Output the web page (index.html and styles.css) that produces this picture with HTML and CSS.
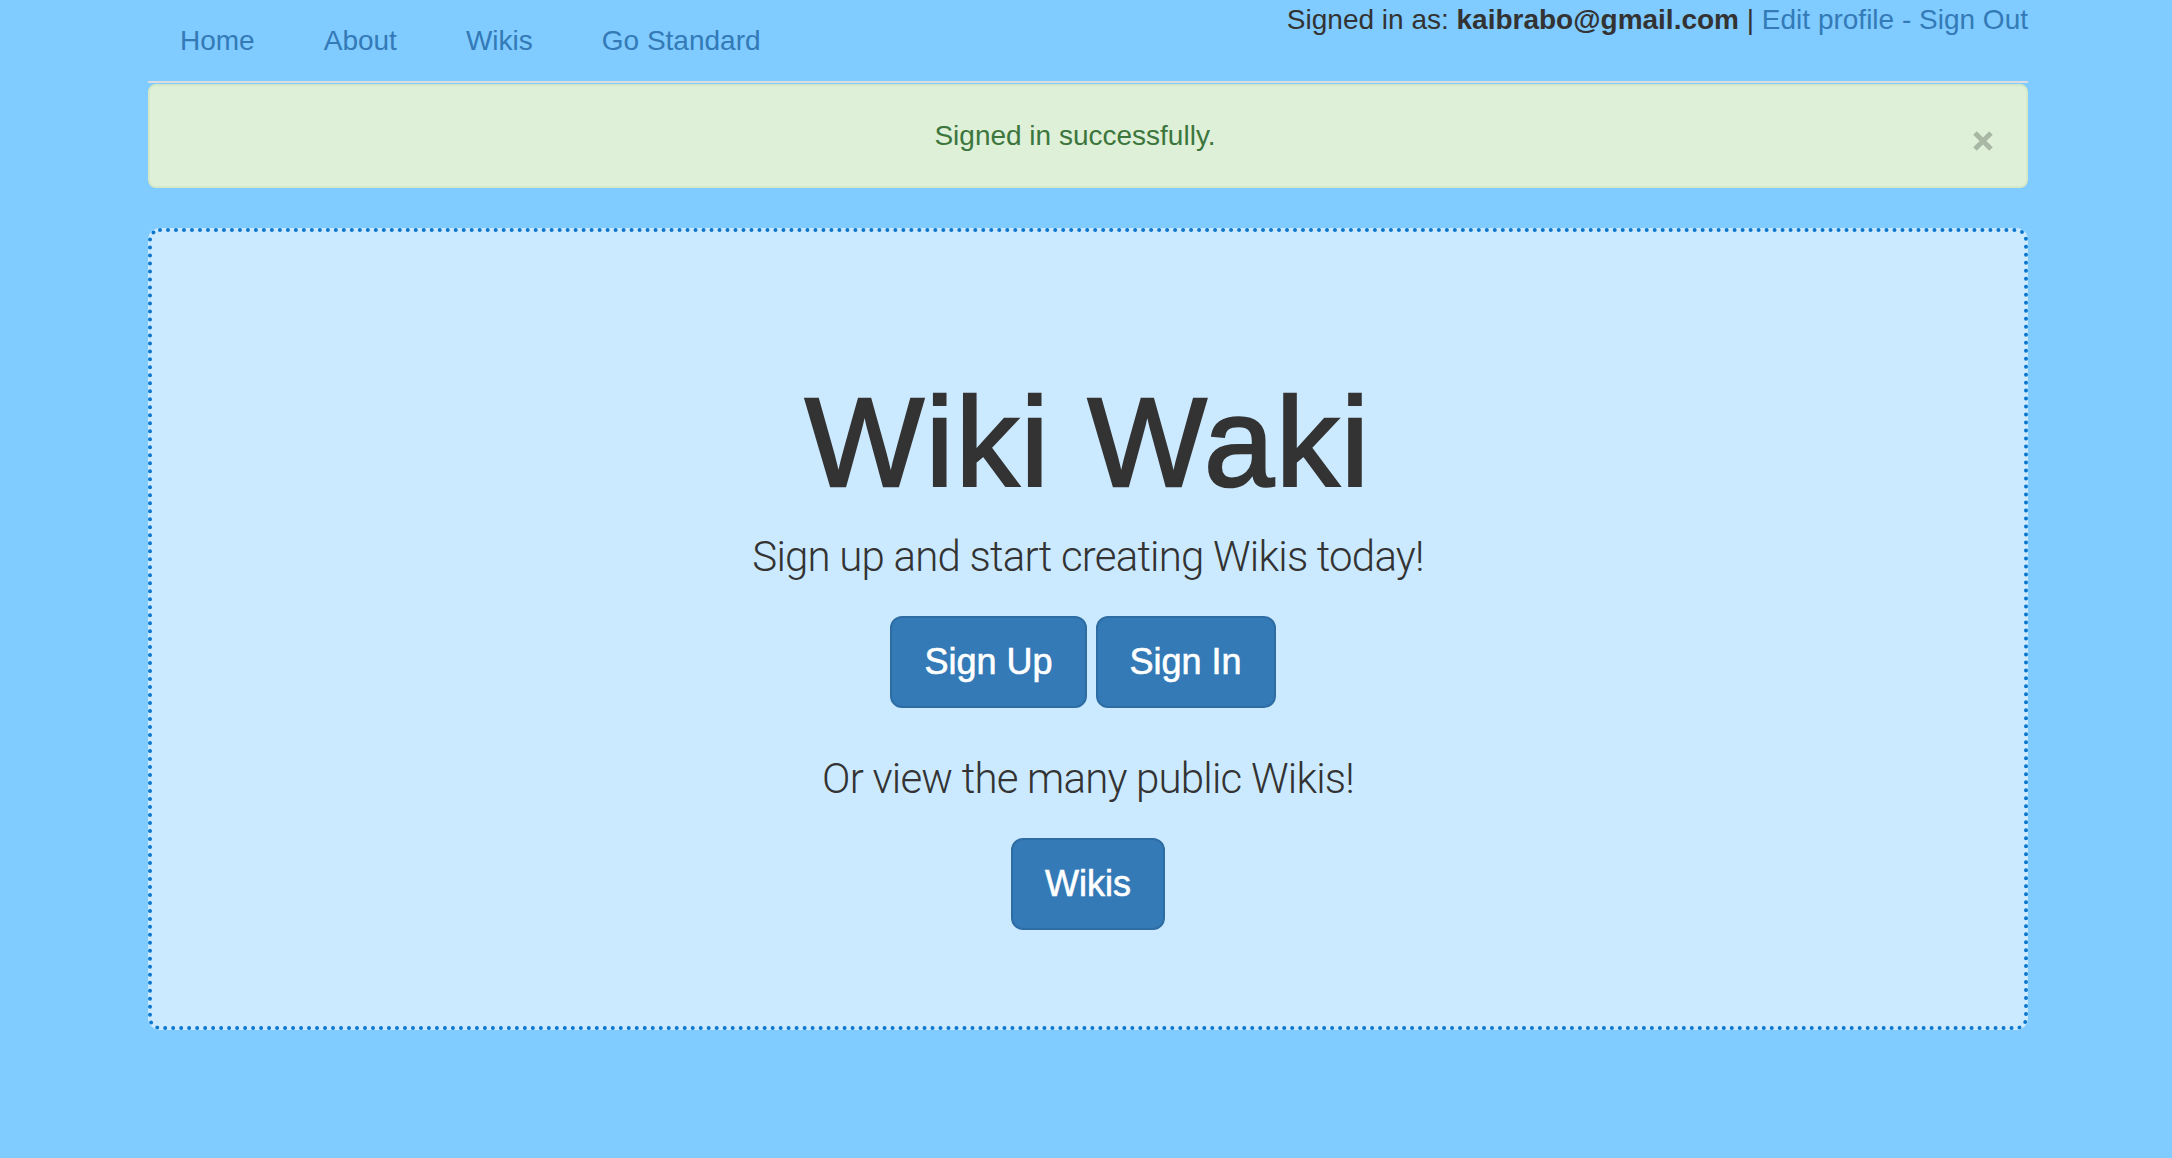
FILE: index.html
```html
<!DOCTYPE html>
<html lang="en">
<head>
<meta charset="utf-8">
<title>Wiki Waki</title>
<link rel="stylesheet" href="styles.css">
</head>
<body>
<div class="container">
  <header class="header">
    <ul class="nav">
      <li><a href="#">Home</a></li>
      <li><a href="#">About</a></li>
      <li><a href="#">Wikis</a></li>
      <li><a href="#">Go Standard</a></li>
    </ul>
    <div class="user-info">Signed in as: <strong>kaibrabo@gmail.com</strong> | <a href="#">Edit profile</a><span class="sep"> - </span><a href="#">Sign Out</a></div>
  </header>

  <div class="alert">
    Signed in successfully.
    <button class="close" type="button" aria-label="Close">
      <svg width="20" height="20" viewBox="0 0 20 20"><path d="M2 2 L18 18 M18 2 L2 18" stroke="#a9b8a4" stroke-width="5" fill="none"/></svg>
    </button>
  </div>

  <section class="jumbotron">
    <h1 class="title">Wiki Waki</h1>
    <p class="lead">Sign up and start creating Wikis today!</p>
    <div class="btn-row">
      <a class="btn" href="#">Sign Up</a>
      <a class="btn" href="#">Sign In</a>
    </div>
    <p class="lead">Or view the many public Wikis!</p>
    <div class="btn-row single">
      <a class="btn" href="#">Wikis</a>
    </div>
  </section>
</div>
</body>
</html>
```

FILE: styles.css
```css
html, body {
  margin: 0;
  padding: 0;
}

body {
  background: #80cbff;
  font-family: "Liberation Sans", Arial, Helvetica, sans-serif;
  font-size: 28px;
  line-height: 40px;
  color: #333;
}

a {
  color: #337ab7;
  text-decoration: none;
}

.container {
  width: 1880px;
  margin-left: 148px;
}

.header {
  display: flex;
  justify-content: space-between;
  align-items: flex-start;
  height: 81px;
  border-bottom: 2px solid #dddddd;
}

.nav {
  list-style: none;
  margin: 1px 0 0 0;
  padding: 0;
  display: flex;
}

.nav li {
  margin-right: 5px;
}

.nav a {
  display: block;
  padding: 20px 32px;
  line-height: 40px;
}

.user-info {
  line-height: 40px;
  white-space: nowrap;
}

.user-info strong {
  font-weight: 700;
}

.user-info .sep {
  color: #337ab7;
}

.alert {
  position: relative;
  margin: 1px 0 40px 0;
  padding: 30px 56px 30px 30px;
  background: #dff0d8;
  border: 2px solid #d6e9c6;
  border-radius: 8px;
  color: #3c763d;
  text-align: center;
  line-height: 40px;
}

.close {
  position: absolute;
  top: 45px;
  right: 33px;
  width: 20px;
  height: 20px;
  padding: 0;
  margin: 0;
  border: 0;
  background: transparent;
  display: block;
}

.close svg {
  display: block;
}

.jumbotron {
  background: #cceaff;
  border: 4px dotted #0b78d0;
  border-radius: 12px;
  padding: 142px 0 96px 0;
  text-align: center;
}

.title {
  margin: 0 0 15.4px 0;
  font-size: 126px;
  line-height: 138.6px;
  font-weight: 400;
  letter-spacing: 2px;
  color: #333;
  -webkit-text-stroke: 2.5px #333;
}

.lead {
  margin: 0 0 29px 0;
  font-family: Roboto, "Liberation Sans", sans-serif;
  font-weight: 300;
  font-size: 42px;
  line-height: 58.8px;
  letter-spacing: -0.8px;
  color: #333;
}

.btn-row {
  display: flex;
  justify-content: center;
  gap: 9px;
  padding-right: 10px;
  margin-bottom: 42px;
}

.btn-row.single {
  padding-right: 0;
  margin-bottom: 0;
}

.btn {
  display: block;
  padding: 20px 32px;
  font-size: 36px;
  line-height: 48px;
  color: #fff;
  background: #337ab7;
  border: 2px solid #2e6da4;
  border-radius: 12px;
  -webkit-text-stroke: 0.6px #fff;
}
```
